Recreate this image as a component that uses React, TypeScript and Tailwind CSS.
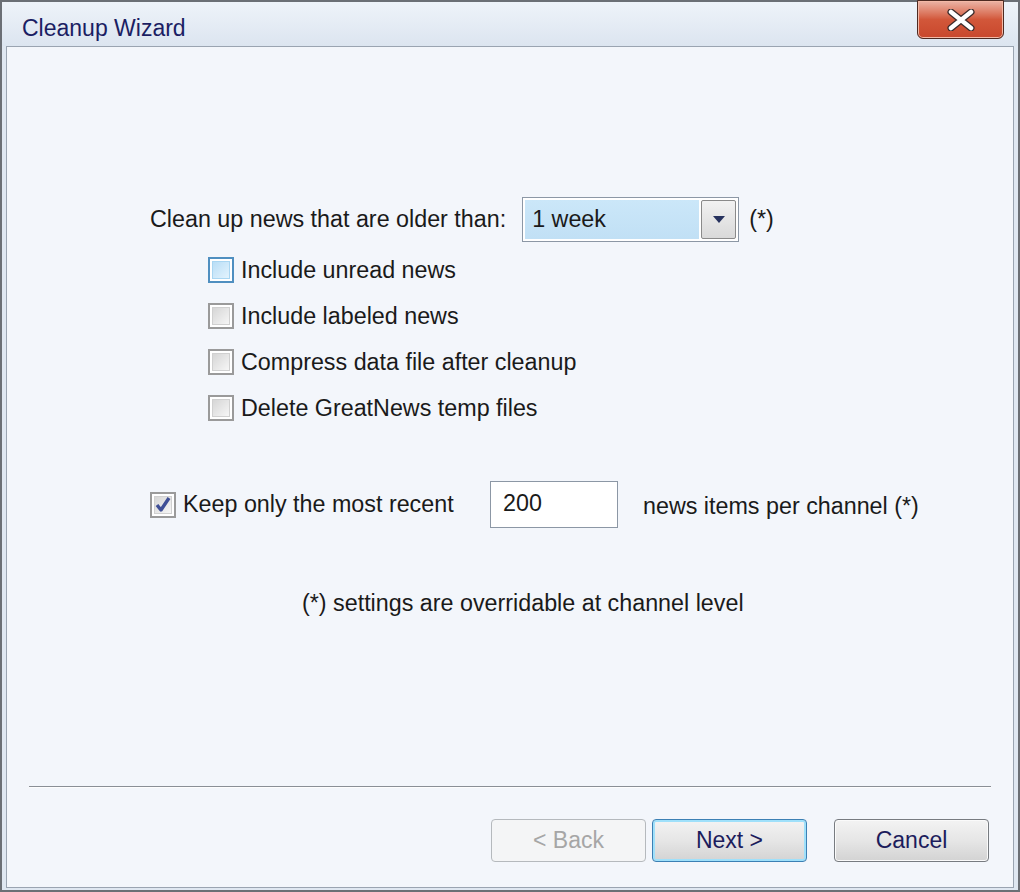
import React from "react"

const font = { fontFamily: '"Liberation Sans", Arial, sans-serif' }

function CheckBox({ checked = false, hover = false }: { checked?: boolean; hover?: boolean }) {
  return (
    <div
      className={
        "relative flex h-[26px] w-[26px] shrink-0 items-center justify-center border-2 bg-white " +
        (hover ? "border-[#4f8fc0]" : "border-[#9a9a9a]")
      }
    >
      <div
        className={
          "h-[18px] w-[18px] border " +
          (hover
            ? "border-[#a9d6f2] bg-gradient-to-br from-[#b9def6] to-[#e3f3fd]"
            : "border-[#d0d0d0] bg-gradient-to-br from-[#d6d6d6] to-[#f6f6f6]")
        }
      />
      {checked && (
        <svg className="absolute left-0 top-0" viewBox="0 0 22 22" width="22" height="22">
          <path d="M5 11 L9 16 L17 4" fill="none" stroke="#3f4f96" strokeWidth="3.4" strokeLinejoin="round" />
        </svg>
      )}
    </div>
  )
}

function Button({ label, variant }: { label: string; variant: "disabled" | "default" | "normal" }) {
  const base =
    "flex h-[43px] w-[155px] items-center justify-center rounded-[4px] border text-[23px]"
  if (variant === "disabled")
    return (
      <div className={base + " border-[#b5b9bd] bg-[#f4f5f6] text-[#a6a6a6]"}>{label}</div>
    )
  return (
    <div
      className={
        base +
        (variant === "default"
          ? " border-[#3c80b4] shadow-[inset_0_0_0_2px_#9fe0fa]"
          : " border-[#777b80] shadow-[inset_0_0_0_1px_#fafafa]") +
        " bg-gradient-to-b from-[#f3f3f3] via-[#e6e6e6] to-[#d3d3d3] text-[#1c1c5c]"
      }
    >
      {label}
    </div>
  )
}

export default function App() {
  return (
    <div className="h-[892px] w-[1020px] overflow-hidden bg-white" style={font}>
      <div className="flex h-full w-full flex-col border-2 border-[#6b6f75] bg-[#dfe7f1]">
        {/* title bar */}
        <div className="relative flex h-[44px] shrink-0 items-center bg-gradient-to-b from-[#eef3f9] to-[#dce5f0] pl-[20px] pt-[8px]">
          <span className="text-[23px] text-[#1b1e63]">Cleanup Wizard</span>
          <div className="absolute right-[14px] top-[-2px] flex h-[39px] w-[87px] items-center justify-center rounded-b-[6px] border border-[#4d2a22] bg-gradient-to-b from-[#eab4a6] via-[#d2573a] to-[#c8472c] shadow-[inset_0_0_0_1px_#f3b9a6]">
            <svg width="30" height="22" viewBox="0 0 30 22">
              <path
                d="M5 3 L25 19 M25 3 L5 19"
                stroke="#3a2a2a"
                strokeWidth="7"
                strokeLinecap="round"
              />
              <path
                d="M5 3 L25 19 M25 3 L5 19"
                stroke="#ffffff"
                strokeWidth="4.5"
                strokeLinecap="round"
              />
            </svg>
          </div>
        </div>
        {/* content */}
        <div className="mx-[4px] mb-[2px] flex flex-1 flex-col border border-[#9aa4b1] bg-[#f3f6fb] text-[23.3px] text-[#1a1a1a]">
          <div className="mt-[150px] flex items-center pl-[143px]">
            <span>Clean up news that are older than:</span>
            <div className="ml-[16px] flex h-[45px] w-[217px] items-center border border-[#8c97a5] bg-white p-[2px]">
              <div className="flex h-full flex-1 items-center bg-gradient-to-b from-[#cbe7f9] to-[#c1e0f5] pl-[7px]">
                1 week
              </div>
              <div className="ml-[2px] flex h-full w-[35px] items-center justify-center rounded-[2px] border border-[#8a8a8a] bg-gradient-to-b from-[#f2f2f2] to-[#d9d9d9]">
                <svg width="14" height="9" viewBox="0 0 14 9">
                  <path d="M1 1 L13 1 L7 8 Z" fill="#27325e" />
                </svg>
              </div>
            </div>
            <span className="ml-[10px]">(*)</span>
          </div>

          <div className="mt-[5px] flex flex-col pl-[201px]">
            {[
              ["Include unread news", true],
              ["Include labeled news", false],
              ["Compress data file after cleanup", false],
              ["Delete GreatNews temp files", false],
            ].map(([t, h]) => (
              <div key={t as string} className="flex h-[46px] items-center gap-[7px]">
                <CheckBox hover={h as boolean} />
                <span>{t as string}</span>
              </div>
            ))}
          </div>

          <div className="mt-[50px] flex items-center pl-[143px]">
            <CheckBox checked />
            <span className="ml-[7px] w-[300px]">Keep only the most recent</span>
            <div className="ml-[7px] flex h-[47px] w-[128px] items-center border border-[#8c97a5] bg-white pb-[3px] pl-[12px]">
              200
            </div>
            <span className="ml-[25px] mt-[4px]">news items per channel (*)</span>
          </div>

          <div className="mt-[58px] pl-[295px]">
            (*) settings are overridable at channel level
          </div>

          <div className="mx-[22px] mt-[165px] h-[2px] border-b border-[#fdfdfd] bg-[#8a8f96]" />

          <div className="mt-[31px] flex justify-end pr-[24px]">
            <Button label="< Back" variant="disabled" />
            <div className="ml-[6px]">
              <Button label="Next >" variant="default" />
            </div>
            <div className="ml-[27px]">
              <Button label="Cancel" variant="normal" />
            </div>
          </div>
        </div>
      </div>
    </div>
  )
}
